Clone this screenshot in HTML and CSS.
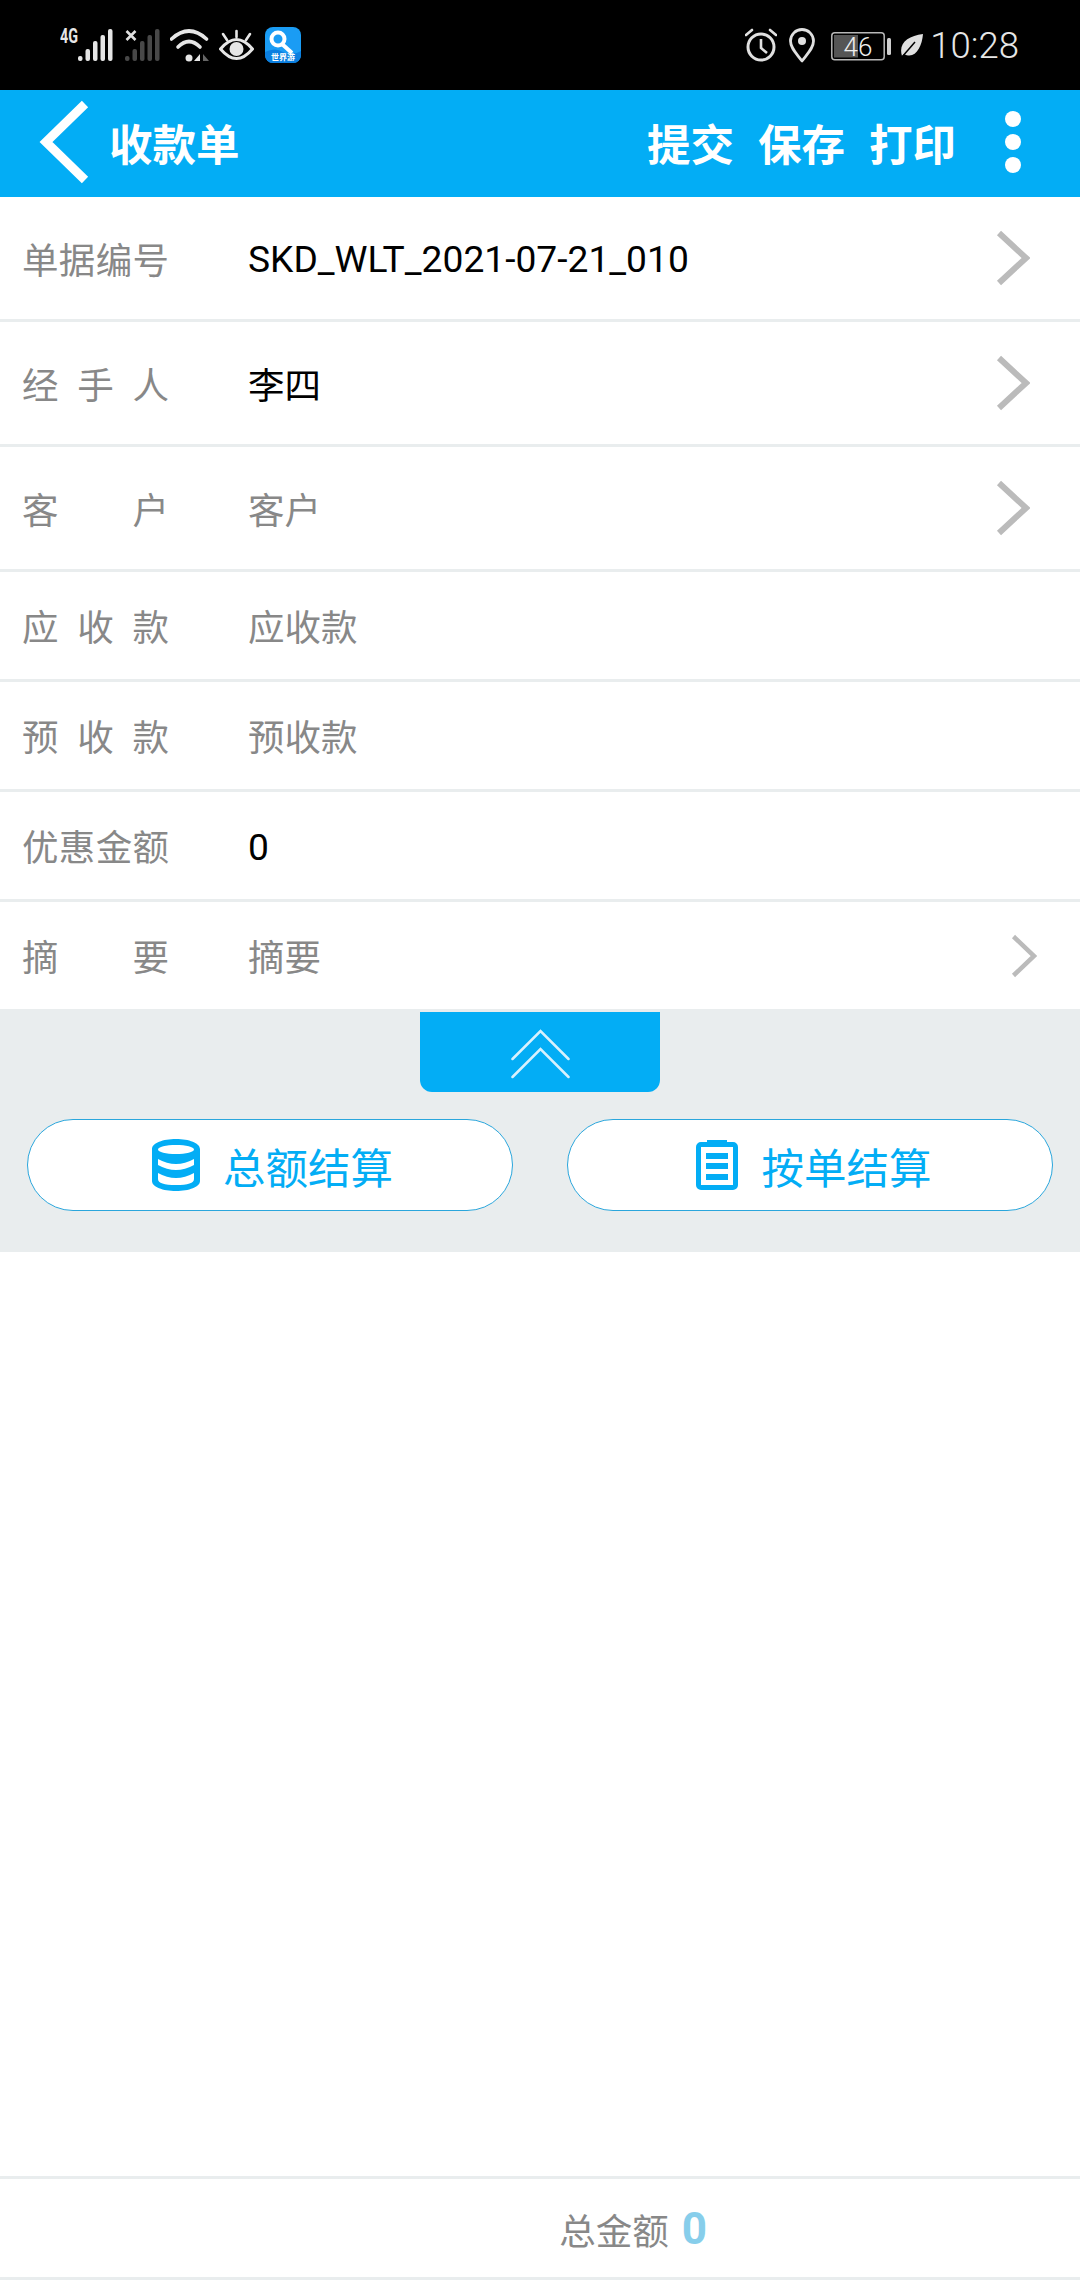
FILE: index.html
```html
<!DOCTYPE html>
<html lang="zh-CN">
<head>
    <meta charset="UTF-8">
    <meta name="viewport" content="width=device-width, initial-scale=1.0">
    <title>收款单</title>
    <link rel="stylesheet" href="styles.css">
</head>
<body>
<div class="page">
    <div class="status-bar">
        <div class="status-left">
            <svg class="ic-signal" viewBox="0 -4 53 40">
                <text x="0" y="16" class="net-type" textLength="18" lengthAdjust="spacingAndGlyphs">4G</text>
                <g fill="#e6e6e6">
                    <rect x="18" y="29" width="4.5" height="5" rx="2"/>
                    <rect x="25.5" y="22" width="4.5" height="12" rx="2"/>
                    <rect x="33" y="14" width="4.5" height="20" rx="2"/>
                    <rect x="40.5" y="8" width="4.5" height="26" rx="2"/>
                    <rect x="48" y="2" width="4.5" height="32" rx="2"/>
                </g>
            </svg>
            <svg class="ic-sim" viewBox="0 0 35 36">
                <path d="M1.5 4l9 9M10.5 4l-9 9" stroke="#e0e0e0" stroke-width="2.6" fill="none"/>
                <g fill="#484848">
                    <rect x="0" y="29" width="4.5" height="5" rx="2"/>
                    <rect x="7.5" y="22" width="4.5" height="12" rx="2"/>
                    <rect x="15" y="14" width="4.5" height="20" rx="2"/>
                    <rect x="22.5" y="8" width="4.5" height="26" rx="2"/>
                    <rect x="30" y="2" width="4.5" height="32" rx="2"/>
                </g>
            </svg>
            <svg class="ic-wifi" viewBox="0 0 39 36">
                <g fill="none" stroke="#e6e6e6" stroke-width="3.6" stroke-linecap="round">
                    <path d="M1.5 12Q19 -4 36.500 12"/>
                    <path d="M8 20Q19 9 30 20"/>
                </g>
                <circle cx="19" cy="31" r="3.500" fill="#e6e6e6"/>
                <path d="M30 27v7h-6z" fill="#e6e6e6"/>
                <path d="M33 27l6 7h-6z" fill="#666"/>
            </svg>
            <svg class="ic-eye" viewBox="0 0 35 36">
                <path d="M1.500 22Q17.500 3 33.500 22Q17.500 41 1.500 22z" fill="none" stroke="#e6e6e6" stroke-width="3"/>
                <circle cx="17.500" cy="22" r="7" fill="#e6e6e6"/>
                <path d="M17.500 4v6M4 7l4 6M31 7l-4 6" stroke="#e6e6e6" stroke-width="2.600" stroke-linecap="round"/>
            </svg>
            <svg class="ic-app" viewBox="0 0 36 36">
                <rect width="36" height="36" rx="8" fill="#1a9cf4"/>
                <path d="M0 25Q10 20 18 25T36 24V28a8 8 0 0 1-8 8H8a8 8 0 0 1-8-8z" fill="#0b7fe0"/>
                <path d="M17 17l10 9" stroke="#fff" stroke-width="4"/>
                <circle cx="13" cy="12" r="6.500" fill="none" stroke="#fff" stroke-width="4"/>
                <text x="18" y="33" class="app-label" text-anchor="middle">世界游</text>
            </svg>
        </div>
        <div class="status-right">
            <svg class="ic-alarm" viewBox="0 0 32 36">
                <circle cx="16" cy="20" r="13" fill="none" stroke="#e0e0e0" stroke-width="3"/>
                <path d="M16 12v9l6 5" fill="none" stroke="#e0e0e0" stroke-width="2.600"/>
                <path d="M1 8l6-5M31 8l-6-5" stroke="#e0e0e0" stroke-width="2.600" stroke-linecap="round"/>
            </svg>
            <svg class="ic-pin" viewBox="0 0 26 36">
                <path d="M13 34C7 26 1.500 21 1.500 14a11.500 11.500 0 0 1 23 0C24.500 21 19 26 13 34z" fill="none" stroke="#e0e0e0" stroke-width="2.800" stroke-linejoin="round"/>
                <circle cx="13" cy="14" r="4" fill="#e0e0e0"/>
            </svg>
            <svg class="ic-battery" viewBox="0 0 60 36">
                <rect x="0.800" y="5.800" width="52.400" height="27" rx="3" fill="none" stroke="#b8b8b8" stroke-width="1.500"/>
                <rect x="3" y="8" width="24" height="22.500" fill="#555"/>
                <rect x="56" y="11" width="4" height="17" rx="1.500" fill="#cfcfcf"/>
                <text x="27" y="29" class="battery-num" text-anchor="middle">46</text>
            </svg>
            <svg class="ic-leaf" viewBox="0 0 23 36">
                <path d="M2 29C-2 16 8 9 23 7C22 20 15 33 4 27z" fill="#e0e0e0"/>
                <path d="M2 30L15 15" stroke="#000" stroke-width="1.500"/>
            </svg>
            <span class="clock">10:28</span>
        </div>
    </div>

    <div class="title-bar">
        <svg class="back-icon" viewBox="0 0 52 84">
            <path d="M47 4L8 42L47 80" fill="none" stroke="#fff" stroke-width="9"/>
        </svg>
        <span class="title">收款单</span>
        <div class="actions">
            <span>提交</span>
            <span>保存</span>
            <span>打印</span>
        </div>
        <div class="more-dots">
            <i></i><i></i><i></i>
        </div>
    </div>

    <div class="form">
        <div class="row row-big">
            <span class="label">单据编号</span>
            <span class="value dark latin">SKD_WLT_2021-07-21_010</span>
            <svg class="arrow-big" viewBox="0 0 34 56"><path d="M3 3L30 28L3 53" fill="none" stroke="#bbb" stroke-width="6"/></svg>
        </div>
        <div class="row row-big">
            <span class="label">经 手 人</span>
            <span class="value dark">李四</span>
            <svg class="arrow-big" viewBox="0 0 34 56"><path d="M3 3L30 28L3 53" fill="none" stroke="#bbb" stroke-width="6"/></svg>
        </div>
        <div class="row row-big">
            <span class="label">客 户</span>
            <span class="value">客户</span>
            <svg class="arrow-big" viewBox="0 0 34 56"><path d="M3 3L30 28L3 53" fill="none" stroke="#bbb" stroke-width="6"/></svg>
        </div>
        <div class="row">
            <span class="label">应 收 款</span>
            <span class="value">应收款</span>
        </div>
        <div class="row">
            <span class="label">预 收 款</span>
            <span class="value">预收款</span>
        </div>
        <div class="row">
            <span class="label">优惠金额</span>
            <span class="value dark latin">0</span>
        </div>
        <div class="row row-last">
            <span class="label">摘 要</span>
            <span class="value">摘要</span>
            <svg class="arrow-small" viewBox="0 0 26 44"><path d="M2.500 2.500L23 22L2.500 41.500" fill="none" stroke="#bbb" stroke-width="4.500"/></svg>
        </div>
    </div>

    <div class="settle">
        <div class="collapse-tab">
            <svg class="collapse-icon" viewBox="0 0 59 50">
                <path d="M1.500 30L29.500 2L57.500 30M1.500 48L29.500 20L57.500 48" fill="none" stroke="#d8f1fd" stroke-width="2.500" stroke-linecap="round"/>
            </svg>
        </div>
        <div class="settle-btns">
            <div class="settle-btn">
                <svg class="ic-db" viewBox="0 0 48 52">
                    <path fill-rule="evenodd" fill="#03adf5" d="M24 0C37 0 48 4 48 10V42C48 48 37 52 24 52S0 48 0 42V10C0 4 11 0 24 0zM24 6C14 6 6 8 6 10.500S14 15 24 15S42 13 42 10.500S34 6 24 6zM6 20Q24 30 42 20V26Q24 36 6 26zM6 34Q24 44 42 34V40Q42 46 24 46Q6 46 6 40z"/>
                </svg>
                <span>总额结算</span>
            </div>
            <div class="settle-btn">
                <svg class="ic-clip" viewBox="0 0 42 50">
                    <path fill-rule="evenodd" fill="#03adf5" d="M11 0H31V2H37A5 5 0 0 1 42 7V45A5 5 0 0 1 37 50H5A5 5 0 0 1 0 45V7A5 5 0 0 1 5 2H11zM5 7V45H37V7z"/>
                    <path d="M10 13H32V19H10zM10 23H32V29H10zM10 34H32V40H10z" fill="#03adf5"/>
                </svg>
                <span>按单结算</span>
            </div>
        </div>
    </div>

    <div class="spacer"></div>

    <div class="footer">
        <span class="total-label">总金额</span>
        <span class="total-num">0</span>
    </div>
</div>
</body>
</html>
```

FILE: styles.css
```css
* {
    box-sizing: border-box;
}
body {
    margin: 0;
    padding: 0;
    background-color: #fff;
    font-family: Roboto, "Noto Sans CJK SC", sans-serif;
}
svg {
    display: block;
    flex-shrink: 0;
}
.page {
    display: flex;
    flex-direction: column;
    width: 1080px;
    height: 2280px;
    overflow: hidden;
}

/* status bar */
.status-bar {
    display: flex;
    justify-content: space-between;
    align-items: center;
    height: 90px;
    padding: 0 61px 0 60px;
    background-color: #000;
}
.status-left, .status-right {
    display: flex;
    align-items: center;
}
.status-left svg, .status-right svg {
    height: 36px;
}
.status-left .ic-signal { width: 53px; height: 40px; margin: -4px 12px 0 0; }
.ic-sim { width: 35px; margin-right: 10px; }
.ic-wifi { width: 39px; margin-right: 10px; }
.ic-eye { width: 35px; margin-right: 11px; }
.ic-app { width: 36px; }
.ic-alarm { width: 32px; margin-right: 12px; }
.ic-pin { width: 26px; margin-right: 16px; }
.ic-battery { width: 60px; margin-right: 9px; }
.ic-leaf { width: 23px; margin-right: 7px; }
.net-type {
    font-family: Roboto, sans-serif;
    font-size: 20px;
    font-weight: 700;
    fill: #e6e6e6;
}
.app-label {
    font-family: "Noto Sans CJK SC", sans-serif;
    font-size: 8px;
    font-weight: 700;
    fill: #fff;
}
.battery-num {
    font-family: Roboto, sans-serif;
    font-size: 26px;
    font-weight: 300;
    fill: #eee;
}
.clock {
    font-size: 36.5px;
    font-weight: 300;
    color: #e6e6e6;
}

/* title bar */
.title-bar {
    display: flex;
    align-items: center;
    height: 107px;
    padding: 0 0 3px 38px;
    background-color: #03adf5;
    color: #fff;
    font-size: 43.5px;
    font-weight: 700;
}
.back-icon {
    width: 52px;
    height: 84px;
}
.title {
    margin-left: 19px;
}
.actions {
    display: flex;
    gap: 24px;
    margin-left: auto;
}
.more-dots {
    display: flex;
    flex-direction: column;
    gap: 7px;
    margin: 0 59px 0 49px;
}
.more-dots i {
    display: block;
    width: 16px;
    height: 16px;
    border-radius: 50%;
    background-color: #fff;
}

/* form rows */
.row {
    display: flex;
    align-items: center;
    height: 110px;
    padding-left: 22px;
    border-bottom: 3px solid #e9edee;
    font-size: 36.5px;
    color: #888;
}
.row-big {
    height: 125px;
}
.row-last {
    height: 107px;
    border-bottom: none;
}
.label {
    width: 147px;
    margin-right: 79px;
    text-align-last: justify;
}
.value.dark {
    color: #000;
}
.value.latin {
    margin-top: 2px;
    font-size: 37.2px;
}
.arrow-big {
    width: 34px;
    height: 56px;
    margin-left: auto;
    margin-right: 50px;
}
.arrow-small {
    width: 26px;
    height: 44px;
    margin-left: auto;
    margin-right: 43px;
}

/* settle area */
.settle {
    height: 243px;
    padding: 3px 27px 0;
    background-color: #e9edee;
}
.collapse-tab {
    display: flex;
    justify-content: center;
    width: 240px;
    height: 80px;
    margin: 0 auto 27px;
    padding-top: 17px;
    border-radius: 0 0 12px 12px;
    background-color: #03adf5;
}
.collapse-icon {
    width: 59px;
    height: 50px;
}
.settle-btns {
    display: flex;
    justify-content: space-between;
}
.settle-btn {
    display: flex;
    justify-content: center;
    align-items: center;
    gap: 23px;
    width: 486px;
    height: 92px;
    padding-left: 5px;
    border: 1px solid #2aa6dc;
    border-radius: 46px;
    background-color: #fff;
    color: #03adf5;
    font-size: 42.5px;
}
.ic-db {
    width: 48px;
    height: 52px;
}
.ic-clip {
    width: 42px;
    height: 50px;
    margin-left: 3px;
}

.spacer {
    flex: 1;
}

/* footer */
.footer {
    display: flex;
    justify-content: flex-end;
    align-items: center;
    gap: 13px;
    height: 104px;
    padding: 2px 373px 0 0;
    border-top: 3px solid #e9edee;
    border-bottom: 3px solid #e9edee;
}
.total-label {
    font-size: 36.5px;
    color: #888;
}
.total-num {
    font-size: 44px;
    font-weight: 700;
    color: #87ceeb;
}
```
